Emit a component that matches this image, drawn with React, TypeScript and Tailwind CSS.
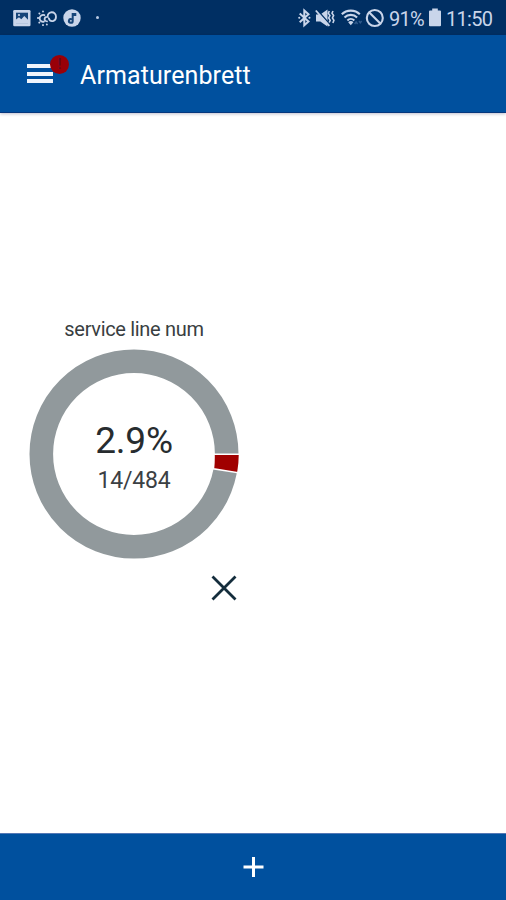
import React from "react";

function StatusBar() {
  return (
    <div className="flex h-[35px] shrink-0 items-center bg-[#002f63] text-[#c9d5ea]">
      <svg className="ml-[13px] h-[18px] w-[18px]" viewBox="0 0 18 18" fill="none">
        <rect x=".2" y="1" width="17.3" height="16.3" rx="1.3" fill="#c9d5ea" />
        <path d="M3 3.7h12v10.4H3z" fill="#174579" />
        <path d="M3 14.1v-3.5l3-2.3 2.3 2 3-3.2 3.7 3.6v3.4z" fill="#c9d5ea" />
        <circle cx="6" cy="6" r="1.1" fill="#c9d5ea" />
      </svg>
      <svg className="ml-[6px] h-[18px] w-[20px]" viewBox="0 0 20 18" fill="none" stroke="currentColor" strokeWidth="1.8" strokeLinecap="round">
        <path d="M7 12.6A3.4 3.4 0 1 1 7.4 6.2" />
        <path d="M6 2.3v.3M2.3 4.4l.2.2M.9 9h.3M2.2 13.7l.2-.2M6 16v.2M9.8 15.4l.1.1" />
        <path d="M10 12.4c-3.6-.2-3-5.1.6-4.5C10.500 1.800 19 1.700 19 7.700c0 4.900-5.800 6.200-7.200 1.600" />
      </svg>
      <svg className="ml-[6px] h-[18px] w-[18px]" viewBox="0 0 18 18">
        <circle cx="9" cy="9" r="8.7" fill="#c9d5ea" />
        <path d="M8.700 3.900v5.300a2.900 2.900 0 1 0 2 2.700V6.900h2.600v-3z" fill="#174579" />
        <circle cx="7.9" cy="11.8" r=".9" fill="#c9d5ea" />
      </svg>
      <div className="ml-[15px] h-[3px] w-[3px] rounded-full bg-[#b8cae3]" />
      <div className="ml-auto flex items-center">
        <svg className="h-[20px] w-[13px]" viewBox="0 0 13 20" fill="none" stroke="currentColor" strokeWidth="2">
          <path d="m1.700 5.500 8.800 8-4.200 3.800V2.400l4.200 3.800-8.800 8" />
          <path d="M1.200 9.800h.1M11.400 9.800h.1" strokeWidth="2" strokeLinecap="round" />
        </svg>
        <svg className="ml-[4px] h-[20px] w-[20px]" viewBox="0 0 20 20" fill="none">
          <path d="M1 6.500h4.300L12.500 1.500v17l-7.200-5H1z" fill="currentColor" />
          <path d="m2 1.700 14 16" stroke="#002f63" strokeWidth="1.6" />
          <path d="m.8 2.500 13.600 15.300" stroke="currentColor" strokeWidth="1.8" />
          <path d="m14.300 3-1 2.200 1.600 2.300-1.200 2.400 1.500 2.400-1 2.200M18 3l-1 2.200 1.600 2.300-1.200 2.400 1.500 2.400-1 2.800" stroke="currentColor" strokeWidth="1.6" />
        </svg>
        <svg className="ml-[6px] h-[20px] w-[22px]" viewBox="0 0 22 20" fill="none" stroke="currentColor" strokeWidth="2.1">
          <path d="M.8 6.300c4.800-4.900 13.200-4.900 18 0M3.500 9.400c3.400-3.400 9.200-3.400 12.600 0M6.400 12.400c2-1.900 4.900-1.900 6.900 0" />
          <path d="M7.200 14.200c1.500-1.500 3.700-1.500 5.200 0L9.800 17.300z" fill="currentColor" stroke="none" />
          <path d="m13.600 16 1.500-2 1.500 2M18 13l1.300 1.800 1.300-1.800" stroke="#315b8c" strokeWidth="1.4" />
        </svg>
        <svg className="ml-[2px] h-[20px] w-[20px]" viewBox="0 0 20 20" fill="none" stroke="currentColor" strokeWidth="2.1">
          <circle cx="9.8" cy="10" r="8" />
          <path d="m4.300 4.500 11 11" />
        </svg>
        <span className="mt-[2px] ml-[4px] w-[37px] whitespace-nowrap text-[20px] leading-none tracking-[-0.8px]">91%</span>
        <svg className="ml-[3px] h-[19px] w-[12px]" viewBox="0 0 12 19" fill="currentColor">
          <path d="M3.200.4h5.600v2H11q1 0 1 1v13.800q0 1-1 1H1q-1 0-1-1V3.400q0-1 1-1h2.200z" />
        </svg>
        <span className="mt-[2px] mr-[13px] ml-[5px] w-[47px] whitespace-nowrap text-[20px] leading-none tracking-[-0.7px]">11:50</span>
      </div>
    </div>
  );
}

export default function App() {
  return (
    <div className="flex h-[900px] w-[506px] flex-col overflow-hidden bg-white font-[Roboto,sans-serif]">
      <StatusBar />
      <header className="z-10 flex h-[78px] shrink-0 items-center border-b border-[#06377d] bg-[#00509e] text-white shadow-[0_1px_3px_rgba(0,0,60,0.25)]">
        <button aria-label="Menu" className="relative ml-[27px] flex h-[19px] w-[26px] flex-col justify-between">
          <span className="h-[4px] w-full bg-[#f0f5fc]" />
          <span className="h-[4px] w-full bg-[#f0f5fc]" />
          <span className="h-[4px] w-full bg-[#f0f5fc]" />
          <span className="absolute -top-[9px] left-[23px] flex h-[19px] w-[19px] items-center justify-center rounded-full bg-[#990008] text-[15px] leading-none font-medium text-[#5f0a24]">!</span>
        </button>
        <h1 className="mt-[3px] ml-[27px] whitespace-nowrap text-[25px] leading-none tracking-[0.1px]">Armaturenbrett</h1>
      </header>
      <main className="min-h-0 grow pt-[205px]">
        <section className="flex w-[268px] flex-col items-center text-[#272c2f]">
          <h2 className="h-[31px] whitespace-nowrap text-[20px] leading-[23px] tracking-[-0.32px] text-[#393e41]">service line num</h2>
          <div className="grid h-[210px] w-[210px]">
            <svg className="col-start-1 row-start-1 h-[210px] w-[210px]" viewBox="0 0 210 210" fill="none">
              <circle cx="105" cy="105" r="92.7" stroke="#91999c" strokeWidth="23.6" />
              <path d="M185 105.200h25.500q0 9.300-1.600 18.500l-24.400-3.900q.7-7.200.5-14.600z" fill="#a00000" stroke="white" strokeWidth="1.5" />
            </svg>
            <div className="col-start-1 row-start-1 flex flex-col items-center pt-[70px]">
              <span className="text-[37px] leading-[44px] tracking-[-0.2px]">2.9%</span>
              <span className="mt-[2px] text-[23px] leading-[32px] tracking-[-0.2px] text-[#3b4043]">14/484</span>
            </div>
          </div>
          <button aria-label="Remove" className="mt-[16px] mr-[31px] self-end">
            <svg className="h-[26px] w-[26px]" viewBox="0 0 26 26" fill="none" stroke="#142d3c" strokeWidth="2.8">
              <path d="m1.500 1.500 23 23M24.500 1.500l-23 23" />
            </svg>
          </button>
        </section>
      </main>
      <footer className="flex h-[67px] shrink-0 items-center justify-center border-t border-[#5478b5] bg-[#00509e]">
        <button aria-label="Add">
          <svg className="h-[22px] w-[22px]" viewBox="0 0 22 22" stroke="white" strokeWidth="3">
            <path d="M11.500 1v20M1.500 11h20" />
          </svg>
        </button>
      </footer>
    </div>
  );
}
